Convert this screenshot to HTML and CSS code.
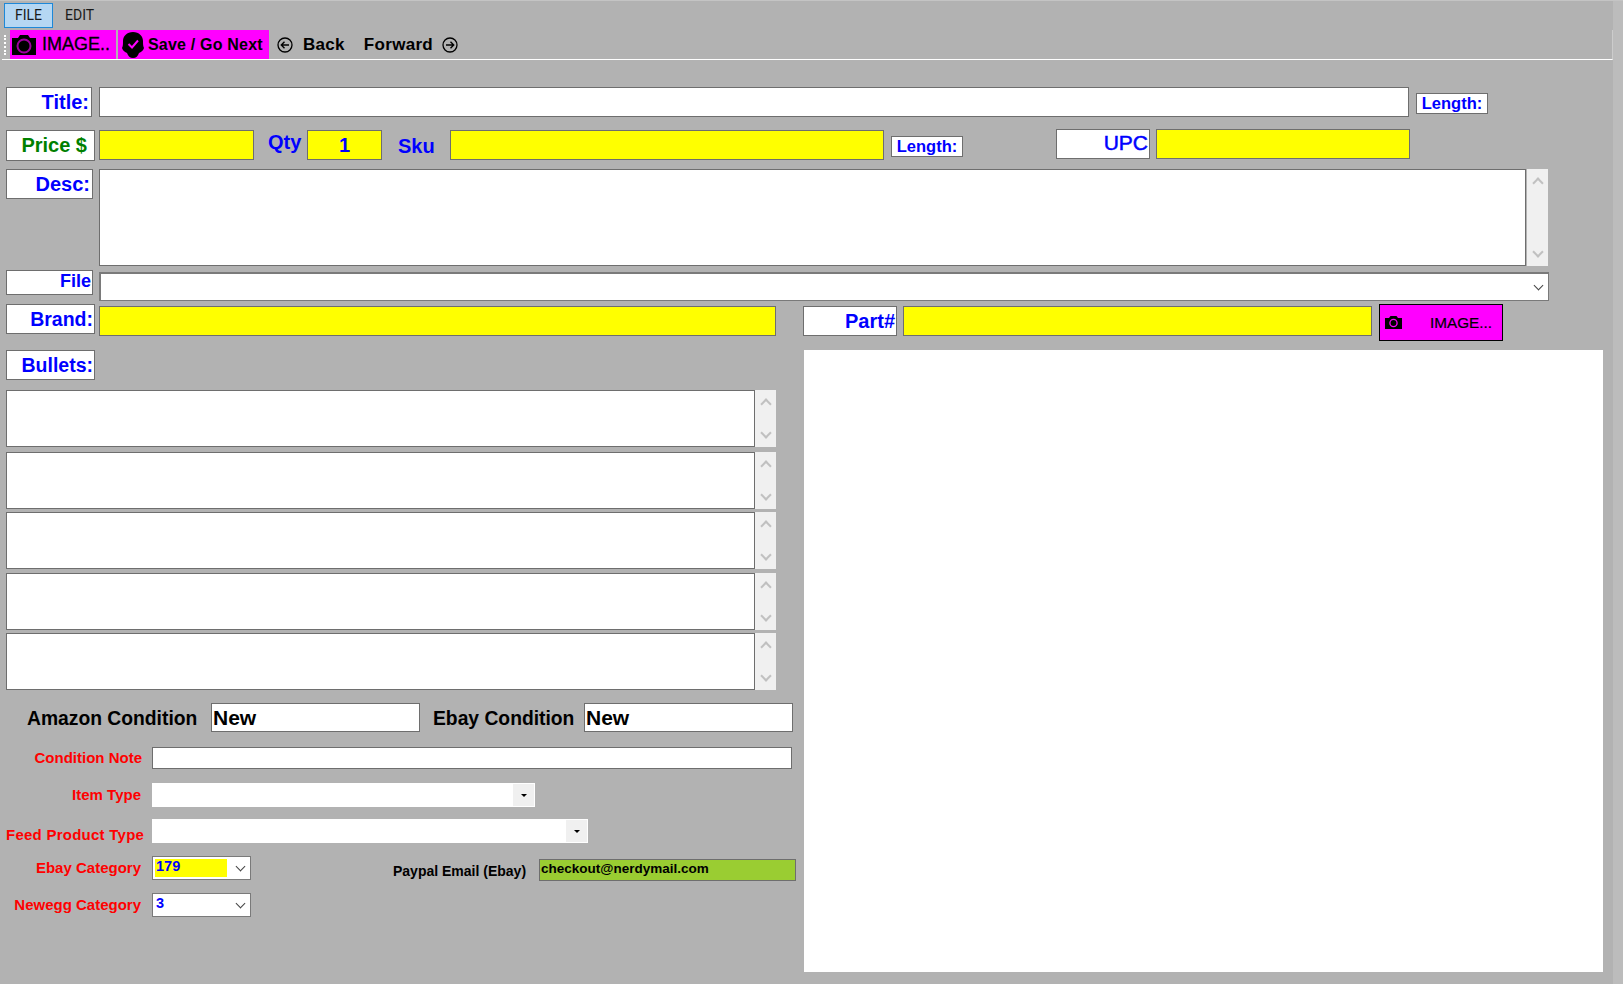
FILE: index.html
```html
<!DOCTYPE html>
<html>
<head>
  <meta charset="UTF-8">
  <title>Listing Editor</title>
  <link rel="stylesheet" href="styles.css">
</head>
<body>

<div class="app">
  <nav class="menubar">
    <span class="menu active">FILE</span>
    <span class="menu">EDIT</span>
  </nav>

  <div class="toolbar">
    <span class="grip"></span>
    <span class="tool magenta tool-image">
      <svg class="cam" width="26" height="22" viewBox="0 0 26 22"><path fill="#000" d="M1 4h6l2-3h8l2 3h6v17H1z"/><circle cx="13" cy="12" r="6.5" fill="none" stroke="#a000a0" stroke-width="2"/></svg>
      IMAGE..
    </span>
    <span class="tool magenta tool-save">
      <svg width="22" height="26" viewBox="0 0 22 26"><path fill="#000" d="M11 0c6 0 10 4 10 9 0 3 0 5 1 7-1 3-3 4-5 5-1 3-3 5-6 5s-5-2-6-5c-2-1-4-2-5-5 1-2 1-4 1-7 0-5 4-9 10-9z"/><path fill="none" stroke="#f0f" stroke-width="2" d="M6.500 12l3.500 3.500 6-7"/></svg>
      Save / Go Next
    </span>
    <svg class="nav-icon nav-left" width="16" height="16" viewBox="0 0 16 16"><circle cx="8" cy="8" r="7" fill="none" stroke="#000" stroke-width="1.3"/><path fill="none" stroke="#000" stroke-width="1.4" d="M12 8H4.500M7.500 4.800 4.300 8l3.200 3.200"/></svg>
    <span class="nav-text back">Back</span>
    <span class="nav-text forward">Forward</span>
    <svg class="nav-icon" width="16" height="16" viewBox="0 0 16 16"><circle cx="8" cy="8" r="7" fill="none" stroke="#000" stroke-width="1.3"/><path fill="none" stroke="#000" stroke-width="1.4" d="M4 8h7.500M8.500 4.800 11.700 8l-3.200 3.200"/></svg>
  </div>

  <main class="form">
    <div class="row row-title">
      <div class="label title-label">Title:</div>
      <div class="field title-field"></div>
      <div class="length length-title">Length:</div>
    </div>

    <div class="row row-price">
      <div class="label price-label">Price $</div>
      <div class="field yellow price-field"></div>
      <div class="plain qty">Qty</div>
      <div class="field yellow qty-field">1</div>
      <div class="plain sku">Sku</div>
      <div class="field yellow sku-field"></div>
      <div class="length length-sku">Length:</div>
      <div class="label upc-label">UPC</div>
      <div class="field yellow upc-field"></div>
    </div>

    <div class="row row-desc">
      <div class="label desc-label">Desc:</div>
      <div class="field desc-field"></div>
      <div class="scroll"><i class="up"></i><i class="down"></i></div>
    </div>

    <div class="row row-file">
      <div class="label file-label">File</div>
      <div class="file-field"><i class="down dark"></i></div>
    </div>

    <div class="columns">
      <section class="left">
        <div class="row row-brand">
          <div class="label brand-label">Brand:</div>
          <div class="field yellow brand-field"></div>
        </div>
        <div class="label bullets-label">Bullets:</div>

        <div class="bullets">
          <div class="bullet"><div class="field bullet-field"></div><div class="scroll"><i class="up"></i><i class="down"></i></div></div>
          <div class="bullet"><div class="field bullet-field"></div><div class="scroll"><i class="up"></i><i class="down"></i></div></div>
          <div class="bullet"><div class="field bullet-field"></div><div class="scroll"><i class="up"></i><i class="down"></i></div></div>
          <div class="bullet"><div class="field bullet-field"></div><div class="scroll"><i class="up"></i><i class="down"></i></div></div>
          <div class="bullet"><div class="field bullet-field"></div><div class="scroll"><i class="up"></i><i class="down"></i></div></div>
        </div>

        <div class="row row-condition">
          <div class="cond-text amazon">Amazon Condition</div>
          <div class="field cond-field">New</div>
          <div class="cond-text ebay">Ebay Condition</div>
          <div class="field cond-field">New</div>
        </div>

        <div class="row red-row note-row">
          <div class="red">Condition Note</div>
          <div class="field note-field"></div>
        </div>
        <div class="row red-row type-row">
          <div class="red">Item Type</div>
          <div class="drop item-drop"><span class="drop-btn"><i></i></span></div>
        </div>
        <div class="row red-row feed-row">
          <div class="red feed-text">Feed Product Type</div>
          <div class="drop feed-drop"><span class="drop-btn"><i></i></span></div>
        </div>
        <div class="row red-row ebay-row">
          <div class="red">Ebay Category</div>
          <div class="combo"><span class="combo-val yellow">179</span><i class="down dark"></i></div>
          <div class="paypal-text">Paypal Email (Ebay)</div>
          <div class="paypal-field">checkout@nerdymail.com</div>
        </div>
        <div class="row red-row newegg-row">
          <div class="red">Newegg Category</div>
          <div class="combo"><span class="combo-val">3</span><i class="down dark"></i></div>
        </div>
      </section>

      <section class="right">
        <div class="row row-part">
          <div class="label part-label">Part#</div>
          <div class="field yellow part-field"></div>
          <div class="image-btn">
            <svg width="17" height="13" viewBox="0 0 17 13"><path fill="#000" d="M0 2h4l1.500-2h6L13 2h4v11H0z"/><circle cx="8.500" cy="7" r="3.600" fill="none" stroke="#f0f" stroke-width="1.300"/></svg>
            <span>IMAGE...</span>
          </div>
        </div>
        <div class="preview"></div>
      </section>
    </div>
  </main>
</div>

<div class="edge"></div>

</body>
</html>
```

FILE: styles.css
```css
html, body { margin: 0; padding: 0; height: 984px; overflow: hidden; }
body { display: flex; background: #b2b2b2; font-family: "Liberation Sans", Arial, sans-serif; border-top: 1px solid #c4c4c4; box-sizing: border-box; }
.app { width: 1613px; }
.edge { width: 10px; background: #bcbcbc; }
i { display: block; }

.menubar { display: flex; height: 26px; padding: 2px 0 0 4px; box-sizing: content-box; }
.menu { height: 23px; font: 14px/23px Roboto, sans-serif; color: #1a1a1a; padding: 0 10px; border: 1px solid transparent; }
.menu.active { background: #b5d7f3; border-color: #1e88d8; }
.menu + .menu { padding-left: 11px; }

.toolbar { display: flex; align-items: center; height: 29px; margin: 1px 0 0 2px; border-bottom: 1px solid #fff; border-right: 1px solid #ccc; }
.grip { width: 2px; height: 20px; margin: 0 4px 0 2px; border-left: 2px dotted #fff; box-sizing: border-box; }
.tool { display: flex; align-items: center; height: 29px; color: #000; box-sizing: border-box; }
.magenta { background: #f0f; }
.tool-image { width: 106px; margin-right: 2px; font-size: 18px; -webkit-text-stroke: .3px #000; }
.tool-image .cam { margin: 0 5px 0 1px; }
.tool-save { width: 151px; font-size: 16px; font-weight: bold; letter-spacing: .2px; padding-left: 4px; }
.tool-save svg { margin-right: 4px; }
.nav-icon { flex: none; }
.nav-left { margin-left: 8px; }
.nav-text { font-size: 17px; font-weight: bold; color: #000; letter-spacing: .3px; }
.back { margin-left: 10px; }
.forward { margin: 0 9px 0 19px; }

.form { padding: 27px 0 0 6px; }
.row { display: flex; }
.label { flex: none; height: 30px; box-sizing: border-box; background: #fff; border: 1px solid #6e6e6e; text-align: right; font-size: 20px; font-weight: bold; line-height: 28px; color: #00f; padding-right: 2px; }
.field { flex: none; height: 30px; box-sizing: border-box; background: #fff; border: 1px solid #6e6e6e; }
.yellow { background: #ff0; }

.row-title { height: 42px; }
.title-label { width: 86px; }
.title-field { width: 1310px; margin-left: 7px; }
.length { flex: none; height: 21px; box-sizing: border-box; background: #fff; border: 1px solid #6e6e6e; color: #00f; font-size: 16.500px; font-weight: bold; line-height: 19px; text-align: center; width: 72px; }
.length-title { margin: 6px 0 0 7px; }

.row-price { height: 40px; }
.price-label { width: 89px; height: 31px; margin-top: 1px; color: #008000; padding-right: 7px; line-height: 29px; }
.price-field { width: 155px; margin: 1px 0 0 4px; }
.plain { color: #00f; font-size: 20px; font-weight: bold; }
.qty { margin: 0 0 0 14px; width: 39px; line-height: 26px; }
.qty-field { width: 75px; margin-top: 1px; color: #00f; font-size: 20px; font-weight: bold; text-align: center; line-height: 28px; }
.sku { margin: 3px 0 0 16px; width: 52px; line-height: 28px; }
.sku-field { width: 434px; margin-top: 1px; }
.length-sku { margin: 7px 0 0 7px; }
.upc-label { width: 94px; margin-left: 93px; font-weight: normal; font-size: 21px; -webkit-text-stroke: .5px #00f; line-height: 26px; padding-right: 1px; }
.upc-field { width: 254px; margin-left: 6px; }

.row-desc { height: 101px; }
.desc-label { width: 87px; }
.desc-field { width: 1427px; height: 97px; margin-left: 6px; }
.scroll { flex: none; display: flex; flex-direction: column; justify-content: space-between; align-items: center; width: 21px; height: 57px; box-sizing: border-box; padding: 10px 0; background: #f0f0f0; }
.row-desc .scroll { height: 97px; margin-left: 1px; }
.up, .down { width: 8px; height: 8px; box-sizing: border-box; border: solid #c0c0c0; }
.up { border-width: 2px 0 0 2px; transform: rotate(45deg); }
.down { border-width: 0 2px 2px 0; transform: rotate(45deg); }
.down.dark { width: 7px; height: 7px; border-color: #444; border-width: 0 1px 1px 0; }

.row-file { height: 34px; }
.file-label { width: 87px; height: 25px; font-size: 18px; line-height: 21px; padding-right: 1px; }
.file-field { width: 1450px; height: 29px; margin: 2px 0 0 6px; box-sizing: border-box; background: #fff; border: 1px solid #7a7a7a; border-top-width: 2px; border-left-width: 2px; display: flex; justify-content: flex-end; align-items: center; padding: 0 6px 4px 0; }

.columns { display: flex; }
.left { width: 798px; flex: none; }
.right { width: 799px; flex: none; }

.row-brand { height: 46px; }
.brand-label { width: 89px; font-size: 19.500px; padding-right: 1px; }
.brand-field { width: 677px; margin: 2px 0 0 4px; }
.bullets-label { width: 89px; font-size: 19.500px; padding-right: 1px; }

.bullets { display: flex; flex-direction: column; gap: 4px; margin-top: 10px; }
.bullet { display: flex; }
.bullet:nth-child(2) { margin-top: 1px; }
.bullet:nth-child(3) { margin-top: -1px; }
.bullet:nth-child(5) { margin-top: -1px; }
.bullet-field { width: 749px; height: 57px; }

.row-condition { margin-top: 13px; height: 44px; }
.cond-text { font-size: 19.300px; font-weight: bold; color: #000; line-height: 32px; white-space: nowrap; box-sizing: border-box; }
.amazon { width: 205px; padding-left: 21px; }
.ebay { width: 164px; padding-left: 13px; }
.cond-field { width: 209px; height: 29px; font-size: 21px; font-weight: bold; color: #000; line-height: 28px; padding-left: 1px; }

.red-row { align-items: flex-start; }
.red { width: 135px; flex: none; text-align: right; color: #f00; font-size: 15px; font-weight: bold; white-space: nowrap; }
.note-row { height: 36px; }
.note-row .red { line-height: 22px; margin-right: 0; width: 136px; }
.note-row .note-field { margin-left: 10px; }
.note-field { width: 640px; height: 22px; }
.type-row { height: 36px; }
.type-row .red { line-height: 24px; }
.feed-row { height: 37px; }
.feed-row .red { line-height: 32px; width: 138px; margin-right: -3px; letter-spacing: .25px; }
.drop { margin-left: 11px; height: 24px; background: #fff; display: flex; justify-content: flex-end; align-items: center; padding-right: 1px; box-sizing: border-box; }
.item-drop { width: 383px; }
.feed-drop { width: 436px; }
.drop-btn { display: flex; align-items: center; justify-content: center; width: 21px; height: 22px; background: #f0f0f0; }
.drop-btn i { border: solid transparent; border-width: 3px 3px 0; border-top-color: #000; }

.ebay-row { height: 37px; }
.ebay-row .red, .newegg-row .red { line-height: 24px; }
.combo { flex: none; width: 99px; height: 24px; margin-left: 11px; box-sizing: border-box; background: #fff; border: 1px solid #7a7a7a; display: flex; align-items: center; justify-content: space-between; padding: 0 6px 3px 2px; }
.combo-val { display: block; width: 72px; height: 18px; margin-top: 3px; padding-left: 1px; box-sizing: border-box; color: #00f; font-size: 14.500px; font-weight: bold; line-height: 15px; }
.paypal-text { width: 132px; margin: 6px 0 0 142px; color: #000; font-size: 14px; font-weight: bold; line-height: 18px; white-space: nowrap; }
.paypal-field { width: 257px; height: 22px; margin: 3px 0 0 14px; box-sizing: border-box; background: #9acd32; border: 1px solid #6e6e6e; color: #000; font-size: 13.500px; font-weight: bold; line-height: 18px; padding-left: 1px; white-space: nowrap; }

.row-part { height: 46px; }
.part-label { width: 94px; margin-top: 2px; padding-right: 1px; margin-left: -1px; }
.part-field { width: 469px; margin: 2px 0 0 6px; }
.image-btn { width: 124px; height: 37px; margin-left: 7px; box-sizing: border-box; background: #f0f; border: 1px solid #000; display: flex; align-items: center; padding: 0 0 0 5px; }
.image-btn span { margin-left: 28px; font-size: 15.300px; color: #000; -webkit-text-stroke: .2px #000; }
.preview { height: 622px; background: #fff; }
```
